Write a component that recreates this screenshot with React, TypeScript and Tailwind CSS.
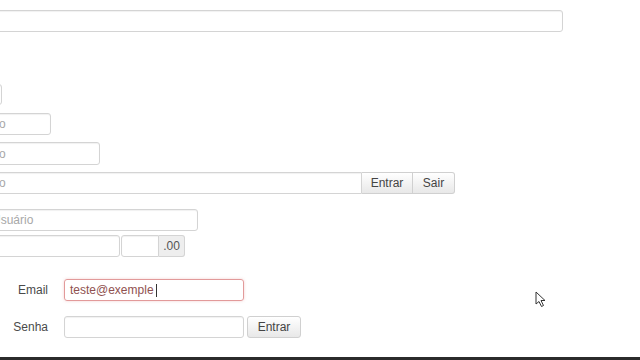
import React from "react";

const inp = "border border-[#d4d4d4] rounded-[3px] bg-white shadow-[inset_0_1px_1px_rgba(0,0,0,0.06)] flex items-center";
const btn = "border border-[#d0d0d0] bg-gradient-to-b from-white to-[#e8e8e8] text-[#444] flex items-center justify-center";

export default function App() {
  return (
    <div className="relative h-[360px] w-[640px] overflow-hidden bg-white flex flex-col text-[12px] text-[#333]" style={{ fontFamily: '"Liberation Sans", Arial, sans-serif' }}>
      <div className="flex-1 flex flex-col">
        <div className={`${inp} mt-[10px] -ml-[60px] w-[623px] h-[22px]`} />
        <div className={`${inp} mt-[52px] -ml-[60px] w-[62px] h-[21px]`} />
        <div className={`${inp} mt-[8px] -ml-[60px] w-[111px] h-[22px] pl-[36px] text-[#a8a8a8]`}>Texto</div>
        <div className={`${inp} mt-[7px] -ml-[60px] w-[160px] h-[23px] pl-[36px] text-[#a8a8a8]`}>Texto</div>
        <div className="flex mt-[7px] -ml-[60px] h-[22px]">
          <div className={`${inp} rounded-r-none w-[422px] h-[22px] pl-[36px] text-[#a8a8a8]`}>Texto</div>
          <div className={`${btn} w-[51px] h-[22px] border-l-0`}>Entrar</div>
          <div className={`${btn} w-[42px] h-[22px] border-l-0 rounded-r-[3px]`}>Sair</div>
        </div>
        <div className={`${inp} mt-[15px] -ml-[60px] w-[258px] h-[22px] pl-[51px] text-[#a8a8a8]`}>Usuário</div>
        <div className="flex mt-[4px] -ml-[60px] h-[22px]">
          <div className={`${inp} w-[180px] h-[22px]`} />
          <div className={`${inp} ml-[1px] w-[38px] h-[22px] rounded-r-none`} />
          <div className="w-[26px] h-[22px] bg-[#eeeeee] border border-l-0 border-[#d4d4d4] rounded-r-[3px] flex items-center justify-center text-[#555]">.00</div>
        </div>
        <div className="flex items-center mt-[22px] h-[22px]">
          <div className="w-[48px] text-right text-[#4a4a4a]">Email</div>
          <div className="ml-[16px] w-[180px] h-[22px] border border-[#e29a9a] rounded-[3px] shadow-[0_0_3px_rgba(220,120,120,0.35)] flex items-center pl-[5px] text-[#8f5150]">
            teste@exemple<span className="ml-[2px] w-px h-[13px] bg-[#333]" />
          </div>
        </div>
        <div className="flex items-center mt-[15px] h-[22px]">
          <div className="w-[48px] text-right text-[#4a4a4a]">Senha</div>
          <div className={`${inp} ml-[16px] w-[180px] h-[22px]`} />
          <div className={`${btn} ml-[3px] w-[54px] h-[22px] rounded-[3px]`}>Entrar</div>
        </div>
      </div>
      <div className="h-[3px] bg-[#2b2b2b]" />
      <svg className="absolute left-[535px] top-[291px]" width="12" height="17" viewBox="0 0 12 17">
        <path d="M1 1 L1 13 L4 10.5 L6.5 15.5 L8.5 14.5 L6 9.5 L10 9.5 Z" fill="#fff" stroke="#333" strokeWidth="1" strokeLinejoin="round" />
      </svg>
    </div>
  );
}
